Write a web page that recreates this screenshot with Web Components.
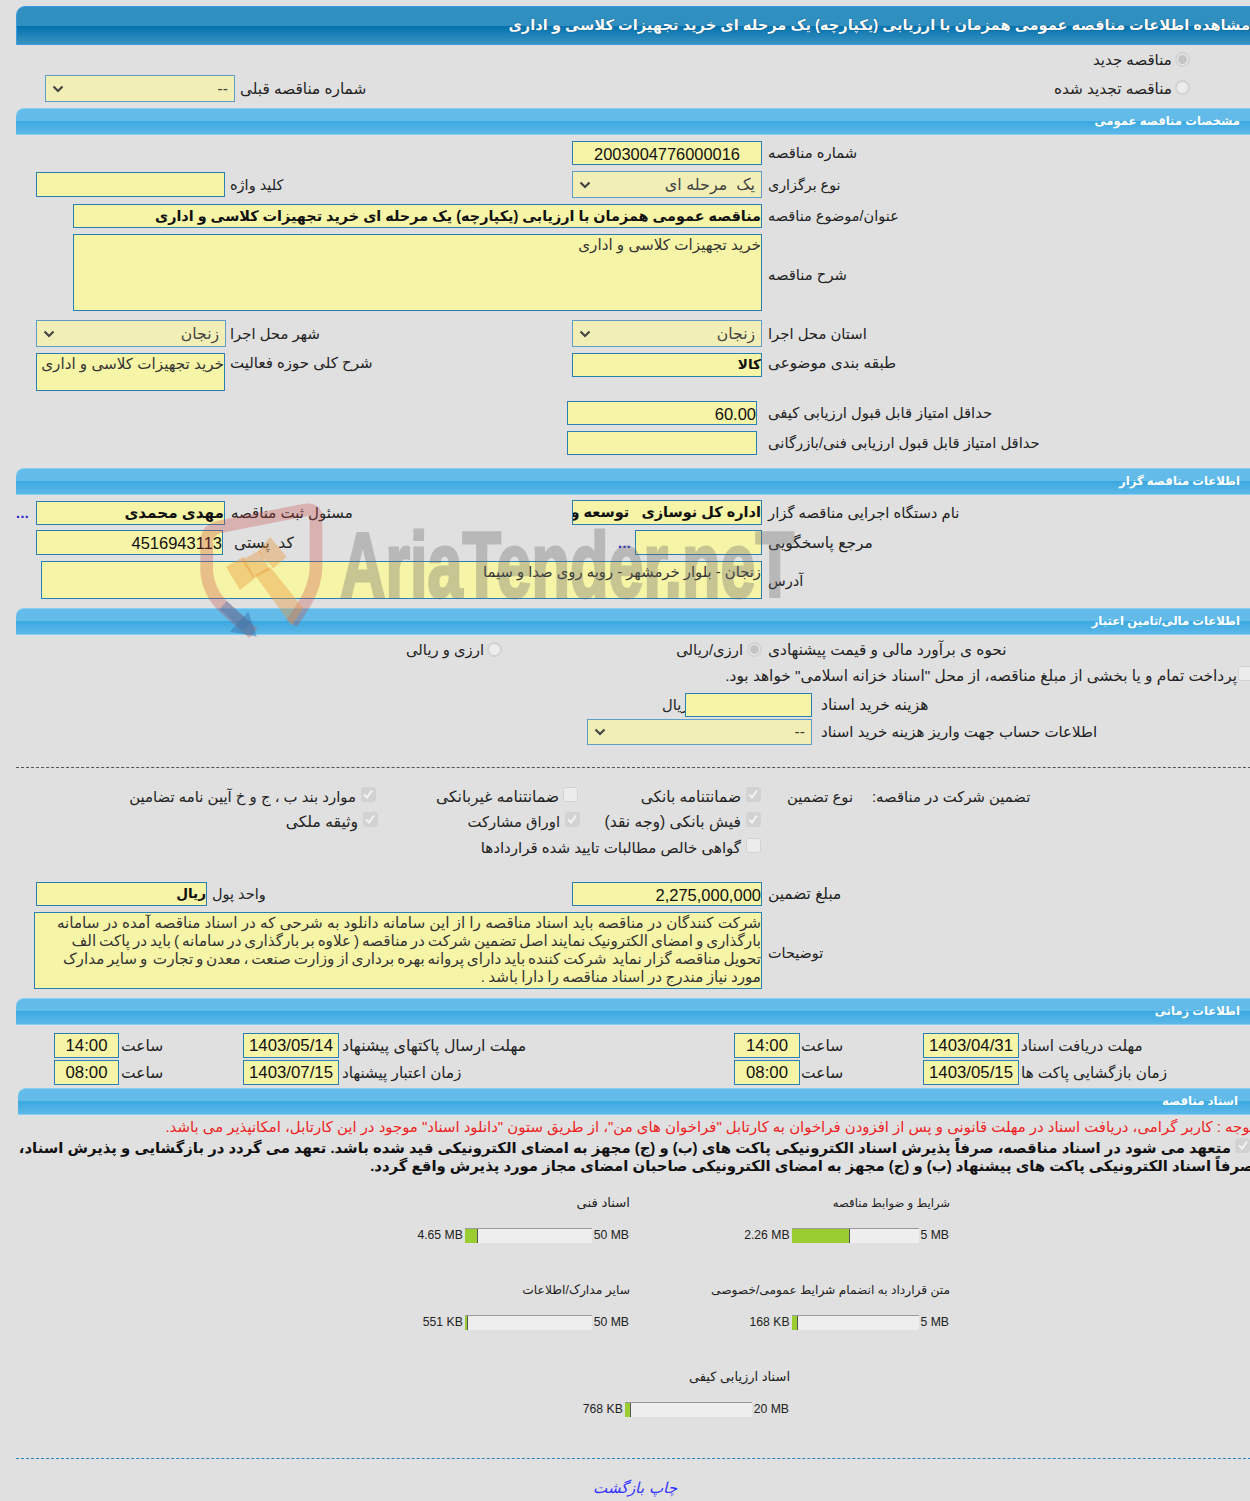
<!DOCTYPE html>
<html lang="fa"><head><meta charset="utf-8"><style>
html,body{margin:0;padding:0;background:#e0e0e0;overflow:hidden;height:1501px}
body{font:14.8px "Liberation Sans","DejaVu Sans",sans-serif;color:#111}
i{display:block}
</style></head><body>
<x-page>
<x-title>مشاهده اطلاعات مناقصه عمومی همزمان با ارزیابی (یکپارچه) یک مرحله ای خرید تجهیزات کلاسی و اداری</x-title>

<x-row style="height:30px;grid-template-columns:1057px 79px 3px 15px"><i></i><x-label style="font-size:15px">مناقصه جدید</x-label><i></i><x-radio checked></x-radio></x-row>
<x-row style="height:27px;margin-bottom:6px;grid-template-columns:9px 190px 5px 779px 153px 3px 15px"><i></i><x-select style="height:27px">--</x-select><i></i><x-label style="font-size:15.3px">شماره مناقصه قبلی</x-label><x-label style="justify-self:end;font-size:15.3px">مناقصه تجدید شده</x-label><i></i><x-radio></x-radio></x-row>
<x-section>مشخصات مناقصه عمومی</x-section>
<x-row style="height:33px;padding-top:6px;align-items:start;grid-template-columns:536px 190px 6px 1fr"><i></i><x-field style="height:24px;font-size:16.4px" big c>2003004776000016</x-field><i></i><x-label style="margin-top:3px">شماره مناقصه</x-label></x-row>
<x-row style="height:33px;grid-template-columns:189px 5px 342px 190px 6px 1fr"><x-field style="height:25px"></x-field><i></i><x-label style="font-size:14.5px">کلید واژه</x-label><x-select style="height:27px;font-size:16px">یک &nbsp;مرحله ای</x-select><i></i><x-label style="font-size:14.3px">نوع برگزاری</x-label></x-row>
<x-row style="height:30px;grid-template-columns:37px 689px 6px 1fr"><i></i><x-field style="height:24px;font-size:14.4px" bold>مناقصه عمومی همزمان با ارزیابی (یکپارچه) یک مرحله ای خرید تجهیزات کلاسی و اداری</x-field><i></i><x-label style="font-size:14.5px">عنوان/موضوع مناقصه</x-label></x-row>
<x-row style="height:87px;padding-top:3px;align-items:start;grid-template-columns:37px 689px 6px 1fr"><i></i><x-field multi style="height:77px;font-size:15.2px">خرید تجهیزات کلاسی و اداری</x-field><i></i><x-label style="margin-top:32px">شرح مناقصه</x-label></x-row>
<x-row style="height:31px;grid-template-columns:190px 4px 342px 190px 6px 1fr"><x-select style="height:27px">زنجان</x-select><i></i><x-label>شهر محل اجرا</x-label><x-select style="height:27px">زنجان</x-select><i></i><x-label>استان محل اجرا</x-label></x-row>
<x-row style="height:49px;padding-top:4px;align-items:start;grid-template-columns:189px 5px 342px 190px 6px 1fr"><x-field multi style="height:38px;font-size:15.2px">خرید تجهیزات کلاسی و اداری</x-field><i></i><x-label style="margin-top:1px;font-size:15px">شرح کلی حوزه فعالیت</x-label><x-field bold style="height:24px;font-size:13.6px">کالا</x-field><i></i><x-label style="margin-top:1px;font-size:15.2px">طبقه بندی موضوعی</x-label></x-row>
<x-row style="height:30px;grid-template-columns:531px 190px 11px 1fr"><i></i><x-field big style="height:24px">60.00</x-field><i></i><x-label>حداقل امتیاز قابل قبول ارزیابی کیفی</x-label></x-row>
<x-row style="height:30px;grid-template-columns:531px 190px 11px 1fr"><i></i><x-field style="height:24px"></x-field><i></i><x-label>حداقل امتیاز قابل قبول ارزیابی فنی/بازرگانی</x-label></x-row>
<x-section style="margin-top:10px">اطلاعات مناقصه گزار</x-section>
<x-row style="height:35px;margin-left:-20px;grid-template-columns:20px 189px 6px 341px 190px 6px 1fr"><x-more></x-more><x-field bold style="height:24px;font-size:15.2px">مهدی محمدی</x-field><i></i><x-label style="font-size:15px">مسئول ثبت مناقصه</x-label><x-field bold style="height:25px;font-size:14.5px">اداره کل نوسازی &nbsp; توسعه و تجهیز مدارس</x-field><i></i><x-label>نام دستگاه اجرایی مناقصه گزار</x-label></x-row>
<x-row style="height:25px;grid-template-columns:187px 11px 384px 17px 127px 6px 1fr"><x-field big style="height:25px">4516943113</x-field><i></i><x-label style="font-size:15.5px">کد &nbsp;پستی</x-label><x-more></x-more><x-field style="height:25px"></x-field><i></i><x-label style="font-size:15.5px">مرجع پاسخگویی</x-label></x-row>
<x-row style="height:50px;grid-template-columns:5px 721px 6px 1fr"><i></i><x-field multi style="height:38px;font-size:14.8px">زنجان - بلوار خرمشهر - روبه روی صدا و سیما</x-field><i></i><x-label style="margin-top:2px;font-size:14.5px">آدرس</x-label></x-row>
<x-section style="margin-top:3px">اطلاعات مالی/تامین اعتبار</x-section>
<x-row style="height:30px;grid-template-columns:371px 77px 3px 15px 175px 66px 4px 15px 6px 1fr"><i></i><x-label style="justify-self:end">ارزی و ریالی</x-label><i></i><x-radio></x-radio><i></i><x-label style="justify-self:end">ارزی/ریالی</x-label><i></i><x-radio checked></x-radio><i></i><x-label style="font-size:15.4px">نحوه ی برآورد مالی و قیمت پیشنهادی</x-label></x-row>
<x-row style="height:22px;grid-template-columns:689px 512px 1px 14px"><i></i><x-label style="justify-self:end;font-size:15.4px">پرداخت تمام و یا بخشی از مبلغ مناقصه، از محل "اسناد خزانه اسلامی" خواهد بود.</x-label><i></i><x-check></x-check></x-row>
<x-row style="height:32px;padding-top:6px;align-items:start;grid-template-columns:626px 23px 127px 9px 1fr"><i></i><x-label style="margin-top:3px">ریال</x-label><x-field style="height:24px"></x-field><i></i><x-label style="margin-top:3px;font-size:15.6px">هزینه خرید اسناد</x-label></x-row>
<x-row style="height:26px;grid-template-columns:551px 225px 9px 1fr"><i></i><x-select style="height:26px">--</x-select><i></i><x-label style="font-size:15px">اطلاعات حساب جهت واریز هزینه خرید اسناد</x-label></x-row>
<x-dash style="margin-top:22px"></x-dash>
<x-row style="height:24px;margin-top:17px;grid-template-columns:93px 227px 5px 14px 61px 123px 4px 15px 62px 101px 5px 15px 25px 67px 19px 1fr"><i></i><x-label style="justify-self:end;font-size:14.9px">موارد بند ب ، ج و خ آیین نامه تضامین</x-label><i></i><x-check checked></x-check><i></i><x-label style="justify-self:end;font-size:15.6px">ضمانتنامه غیربانکی</x-label><i></i><x-check></x-check><i></i><x-label style="justify-self:end;font-size:15.4px">ضمانتنامه بانکی</x-label><i></i><x-check checked></x-check><i></i><x-label style="justify-self:end">نوع تضمین</x-label><i></i><x-label>تضمین شرکت در مناقصه:</x-label></x-row>
<x-row style="height:26px;grid-template-columns:250px 72px 5px 14px 91px 92px 5px 15px 24px 137px 5px 15px"><i></i><x-label style="justify-self:end;font-size:15.6px">وثیقه ملکی</x-label><i></i><x-check checked></x-check><i></i><x-label style="justify-self:end">اوراق مشارکت</x-label><i></i><x-check checked></x-check><i></i><x-label style="justify-self:end;font-size:15.6px">فیش بانکی (وجه نقد)</x-label><i></i><x-check checked></x-check></x-row>
<x-row style="height:26px;grid-template-columns:444px 261px 5px 15px"><i></i><x-label style="justify-self:end;font-size:15px">گواهی خالص مطالبات تایید شده قراردادها</x-label><i></i><x-check></x-check></x-row>
<x-row style="height:32px;margin-top:17px;grid-template-columns:171px 5px 360px 190px 6px 1fr"><x-field bold style="height:24px;font-size:13.6px">ریال</x-field><i></i><x-label style="font-size:14.5px">واحد پول</x-label><x-field big style="height:24px">2,275,000,000</x-field><i></i><x-label style="font-size:15.4px">مبلغ تضمین</x-label></x-row>
<x-row style="height:86px;margin-top:2px;margin-left:-2px;align-items:start;grid-template-columns:728px 6px 1fr"><x-field multi tight style="height:77px">شرکت کنندگان در مناقصه باید اسناد مناقصه را از این سامانه دانلود به شرحی که در اسناد مناقصه آمده در سامانه<br><span style="word-spacing:-1.3px">بارگذاری و امضای الکترونیک نمایند اصل تضمین شرکت در مناقصه ( علاوه بر بارگذاری در سامانه ) باید در پاکت الف</span><br><span style="word-spacing:-1.4px">تحویل مناقصه گزار نماید &nbsp;شرکت کننده باید دارای پروانه بهره برداری از وزارت صنعت ، معدن و تجارت &nbsp;و سایر مدارک</span><br><span style="word-spacing:-.8px">مورد نیاز مندرج در اسناد مناقصه را دارا باشد .</span></x-field><i></i><x-label style="margin-top:32px;font-size:14.4px">توضیحات</x-label></x-row>
<x-section>اطلاعات زمانی</x-section>
<x-row style="height:27px;margin-top:7px;grid-template-columns:18px 65px 2px 120px 2px 96px 3px 392px 66px 1px 122px 96px 2px 1fr"><i></i><x-field big c style="height:25px">14:00</x-field><i></i><x-label style="font-size:15.5px">ساعت</x-label><i></i><x-field big c style="height:25px">1403/05/14</x-field><i></i><x-label style="font-size:15.8px">مهلت ارسال پاکتهای پیشنهاد</x-label><x-field big c style="height:25px">14:00</x-field><i></i><x-label style="font-size:15.5px">ساعت</x-label><x-field big c style="height:25px">1403/04/31</x-field><i></i><x-label style="font-size:15.2px">مهلت دریافت اسناد</x-label></x-row>
<x-row style="height:27px;grid-template-columns:18px 65px 2px 120px 2px 96px 3px 392px 66px 1px 122px 96px 2px 1fr"><i></i><x-field big c style="height:25px">08:00</x-field><i></i><x-label style="font-size:15.5px">ساعت</x-label><i></i><x-field big c style="height:25px">1403/07/15</x-field><i></i><x-label style="font-size:15.2px">زمان اعتبار پیشنهاد</x-label><x-field big c style="height:25px">08:00</x-field><i></i><x-label style="font-size:15.5px">ساعت</x-label><x-field big c style="height:25px">1403/05/15</x-field><i></i><x-label style="font-size:15.2px">زمان بازگشایی پاکت ها</x-label></x-row>
<x-section style="margin-left:2px;margin-top:2px;padding-right:28px">اسناد مناقصه</x-section>
<x-notice>
<p class="r" style="margin:3px 0 3px;color:#e22;font-size:14.9px;line-height:18px">توجه : کاربر گرامی، دریافت اسناد در مهلت قانونی و پس از افزودن فراخوان به کارتابل "فراخوان های من"، از طریق ستون "دانلود اسناد" موجود در این کارتابل، امکانپذیر می باشد.</p>
<p class="b" style="margin:0;font-weight:700;font-size:14.85px;line-height:18px;color:#111"><x-check checked style="margin:0 4px 0 4px;transform:translateY(-4px)"></x-check>متعهد می شود در اسناد مناقصه، صرفاً پذیرش اسناد الکترونیکی پاکت های (ب) و (ج) مجهز به امضای الکترونیکی قید شده باشد. تعهد می گردد در بازگشایی و پذیرش اسناد،<br>صرفاً اسناد الکترونیکی پاکت های پیشنهاد (ب) و (ج) مجهز به امضای الکترونیکی صاحبان امضای مجاز مورد پذیرش واقع گردد.</p>
</x-notice>
<x-meters style="margin-top:16px">
<x-meter style="width:614px;--ns:13.2px" name="اسناد فنی" value="4.65 MB" max="50 MB" fill="13"></x-meter>
<x-meter style="width:320px;--ns:11.6px" name="شرایط و ضوابط مناقصه" value="2.26 MB" max="5 MB" fill="58"></x-meter>
</x-meters>
<x-meters>
<x-meter style="width:614px;--ns:12.3px" name="سایر مدارک/اطلاعات" value="551 KB" max="50 MB" fill="3"></x-meter>
<x-meter style="width:320px;--ns:12.2px" name="متن قرارداد به انضمام شرایط عمومی/خصوصی" value="168 KB" max="5 MB" fill="6"></x-meter>
</x-meters>
<x-meters>
<x-meter style="width:774px;--ns:13px" name="اسناد ارزیابی کیفی" value="768 KB" max="20 MB" fill="6"></x-meter>
</x-meters>
<x-dash style="margin-top:3px;border-top-color:#2a85bd"></x-dash>
<x-links><a>چاپ</a> <a>بازگشت</a></x-links>
<x-watermark></x-watermark>
</x-page>
<script>
const mk=(name,css,html,extra)=>customElements.define(name,class extends HTMLElement{
 constructor(){super();this.attachShadow({mode:'open'}).innerHTML='<style>'+css+'</style>'+html;}
 connectedCallback(){extra&&extra.call(this)}
});
mk('x-page',':host{display:block;position:relative;width:1250px;margin-left:16px;padding-top:6px}','<slot></slot>');
mk('x-title',':host{display:block;height:39px;box-sizing:border-box;border:1px solid #3a9be0;border-radius:9px 0 0 0;background:linear-gradient(#2f8fbe 0,#2f8fbe 50%,#0372ad 52%,#3a93c2 100%);color:#fff;font-weight:700;font-size:14.65px;line-height:36px;direction:rtl;white-space:nowrap;overflow:hidden;padding-right:15px;text-shadow:0 0 1px #036}','<slot></slot>');
mk('x-section',':host{display:block;height:27px;box-sizing:border-box;border-top:1px solid #85d0f5;border-bottom:1px solid #85d0f5;border-radius:8px 0 0 0;background:linear-gradient(#62bbe9 0,#62bbe9 48%,#3ca9e1 50%,#5db8e8 100%);color:#fff;font-weight:700;font-size:11.6px;line-height:24px;direction:rtl;white-space:nowrap;padding-right:26px}','<slot></slot>');
mk('x-row',':host{display:grid;box-sizing:border-box;padding-left:20px;align-items:center;width:1250px}::slotted(x-label){justify-self:start}::slotted(x-check){margin-bottom:5px}::slotted(x-radio){margin-bottom:2px}','<slot></slot>');
mk('x-label',':host{display:block;direction:rtl;white-space:nowrap;font-size:14.8px;line-height:18px;color:#222}','<slot></slot>');
mk('x-field',`:host{display:block;box-sizing:border-box;background:#f6f4a6;border:1px solid #2a7fb5;direction:rtl;white-space:nowrap;overflow:hidden;font-size:14.8px;line-height:22px;color:#111}
:host([bold]){font-weight:700}:host([big]){font-size:16.5px;padding-top:1px}:host([c]){text-align:center;font-size:16.8px}
:host([multi]){line-height:18px;white-space:normal;color:#333;font-size:15px;padding-top:1px}:host([tight]){white-space:nowrap;font-size:15.2px}`,'<slot></slot>');
mk('x-select',`:host{display:flex;box-sizing:border-box;align-items:center;background:#f2efb6;border:1px solid #5f9cc6;color:#444;font-size:15.6px;direction:rtl;padding:0 6px}span{flex:1}svg{flex:none}`,'<span><slot></slot></span><svg width="12" height="8" viewBox="0 0 12 8"><path d="M1.5 1.5 6 6l4.5-4.5" fill="none" stroke="#444" stroke-width="2.2"/></svg>');
mk('x-radio',`:host{display:block;width:15px;height:15px;box-sizing:border-box;border-radius:50%;border:2px solid #d2d2d2;background:#ececec;position:relative}
:host([checked])::after{content:"";position:absolute;inset:1px;border-radius:50%;background:#c4c4c4}`,'');
mk('x-check',`:host{display:inline-block;width:15px;height:15px;box-sizing:border-box;border-radius:3px;border:1.5px solid #d2d2d2;background:#ececec;vertical-align:middle}
:host([checked]){background:#d2d2d2}svg{display:none;margin:1px}:host([checked]) svg{display:block}`,'<svg width="10" height="10" viewBox="0 0 10 10"><path d="M1 5.5 4 8.5 9 1.5" fill="none" stroke="#f4f4f4" stroke-width="2"/></svg>');
mk('x-more',':host{display:block;color:#22c;font-size:14px;font-weight:700;letter-spacing:.5px;text-align:left}','<span>...</span>');
mk('x-dash',':host{display:block;border-top:1px dashed #555}','');
mk('x-notice',':host{display:block;direction:rtl;white-space:nowrap;margin-right:12px;height:60px}','<slot></slot>');
mk('x-meters',':host{display:flex;height:87px;align-items:flex-start}','<slot></slot>');
mk('x-meter',`:host{display:flex;flex:none;flex-direction:column;align-items:flex-end;font-size:12.2px;color:#222}
.n{direction:rtl;font-size:var(--ns,12.5px);line-height:18px;white-space:nowrap;margin-bottom:16px}
.b{display:flex;align-items:center;gap:2px;padding-right:1px;line-height:15px}
.t{width:127px;height:15px;box-sizing:border-box;background:#eee;border-top:1px solid #999;display:block}
.f{display:block;height:14px;box-sizing:border-box;background:#9acd32;border-right:1px solid #555}`,
 '<div class="n"></div><div class="b"><span class="v"></span><span class="t"><span class="f"></span></span><span class="m"></span></div>',
 function(){const s=this.shadowRoot;s.querySelector('.n').textContent=this.getAttribute('name');s.querySelector('.v').textContent=this.getAttribute('value');s.querySelector('.m').textContent=this.getAttribute('max');s.querySelector('.f').style.width=this.getAttribute('fill')+'px';});
mk('x-links',':host{display:block;margin-top:20px;text-align:center;width:1238px;direction:rtl;font-size:15px;font-style:italic;line-height:18px}::slotted(a){color:#33f}','<slot></slot>');
mk('x-watermark',`:host{position:absolute;left:174px;top:495px;width:640px;height:150px;pointer-events:none}
svg{position:absolute;left:0;top:0}
span{position:absolute;left:150px;top:24px;font:700 92px/1 "Liberation Sans",sans-serif;color:#696969;opacity:.33;-webkit-text-stroke:3px #696969;transform:scaleX(.685);transform-origin:0 0;white-space:nowrap}`,
`<svg width="160" height="150" viewBox="0 0 480 450"><path d="M305 385C350 320 375 280 378 220L378 65Q375 40 345 45L90 95Q50 105 50 140L50 230Q55 290 100 335L190 415" fill="none" stroke="rgba(200,70,70,.3)" stroke-width="38"/>
<g fill="rgba(232,150,60,.4)"><path d="M108 215 160 185 195 250 150 285Z"/><path d="M205 170 240 125 290 185 250 220Z"/><path d="M155 195 210 165 240 225 190 250Z"/><path d="M195 240 240 215 340 340 305 392Z"/></g>
<path d="M100 330 170 395" stroke="rgba(60,115,170,.38)" stroke-width="32" fill="none"/><path d="M175 350 200 425 120 410Z" fill="rgba(60,115,170,.5)"/></svg><span>AriaTender.neT</span>`);
</script>
</body></html>
